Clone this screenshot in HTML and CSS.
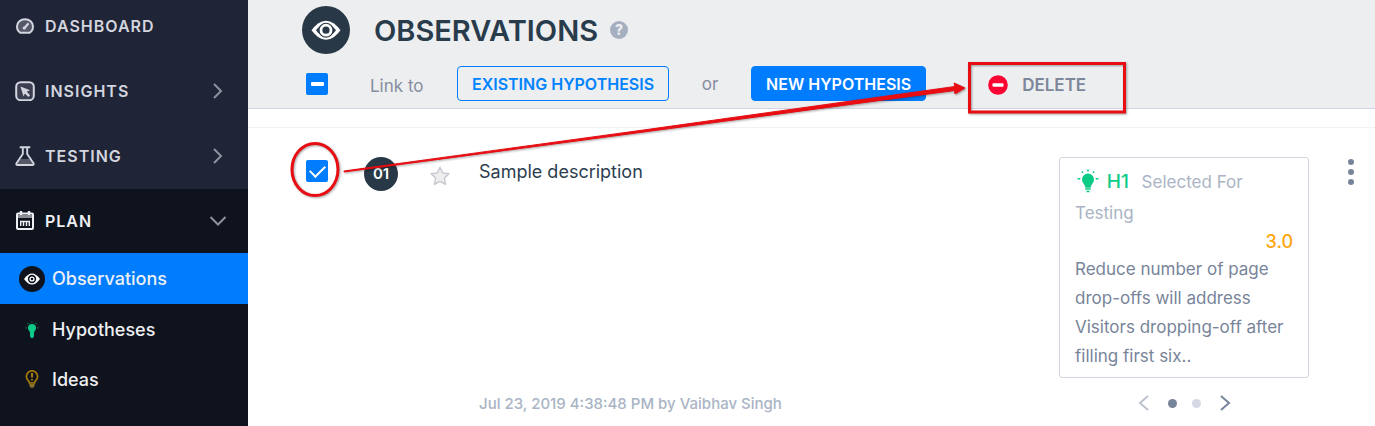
FILE: index.html
```html
<!DOCTYPE html>
<html lang="en">
  <head>
    <meta charset="UTF-8" />
    <meta name="viewport" content="width=device-width, initial-scale=1.0" />
    <title>Observations</title>
    <link rel="stylesheet" href="styles.css">
  </head>
  <body>
    <div class="container">
      <nav class="sidebar">
        <div class="nav-group">
          <a class="nav-item" href="#">
            <svg class="nav-icon" viewBox="0 0 20 20">
              <path d="M5.500 16.800q-3.500-2-3.500-6.300a8 7.300 0 0 1 16 0q0 4.300-3.500 6.300z" fill="#545869" stroke="currentColor" stroke-width="2" stroke-linejoin="round" />
              <path d="M9.500 12L13 8" stroke="currentColor" stroke-width="2.200" stroke-linecap="round" />
              <circle cx="9.200" cy="12" r="1.600" fill="currentColor" />
            </svg>
            <span>DASHBOARD</span>
          </a>
          <a class="nav-item" href="#">
            <svg class="nav-icon" viewBox="0 0 20 20">
              <rect x="1.200" y="1.200" width="17.600" height="18" rx="4.500" fill="#3b3f51" stroke="currentColor" stroke-width="2" />
              <path d="M5.500 5.500l9.500 3.700-3.200 1.600 3.300 3.400-1.800 1.800-3.400-3.500-1.400 3z" fill="currentColor" />
            </svg>
            <span>INSIGHTS</span>
            <svg class="chevron" viewBox="0 0 18 18"><path d="M5 2l7 7-7 7" /></svg>
          </a>
          <a class="nav-item" href="#">
            <svg class="nav-icon" viewBox="0 0 20 20">
              <path d="M5.500 13h9l3.500 5H2z" fill="#545869" />
              <path d="M5.500 1.200h9M7.800 1.500v6.500L1.500 17.200q-.8 1.800 1.200 1.800h14.600q2 0 1.200-1.800L12.200 8V1.500" fill="none" stroke="currentColor" stroke-width="1.900" stroke-linecap="round" stroke-linejoin="round" />
            </svg>
            <span>TESTING</span>
            <svg class="chevron" viewBox="0 0 18 18"><path d="M5 2l7 7-7 7" /></svg>
          </a>
        </div>

        <div class="nav-group open">
          <a class="nav-item" href="#">
            <svg class="nav-icon" viewBox="0 0 20 20">
              <rect x="2" y="2.500" width="16" height="15.500" rx="1" fill="none" stroke="currentColor" stroke-width="2" />
              <path d="M3 5.500h14" stroke="#8b8e96" stroke-width="3" />
              <path d="M6 0v4M14 0v4" stroke="currentColor" stroke-width="2.400" />
              <path d="M5 10.500h10M5.700 11v4M8.500 11v4M11.500 11v4M14.300 11v4" stroke="currentColor" stroke-width="1.400" />
            </svg>
            <span>PLAN</span>
            <svg class="chevron" viewBox="0 0 18 18"><path d="M1.500 5L9 12.500 16.500 5" /></svg>
          </a>
          <a class="sub-item active" href="#">
            <svg class="sub-icon" viewBox="0 0 26 26">
              <circle cx="13" cy="13" r="13" fill="#0f131d" />
              <path d="M5 13q8-11 16 0-8 11-16 0z" fill="#fff" />
              <circle cx="13" cy="13" r="4.200" fill="#0f131d" />
              <circle cx="13" cy="13" r="2.600" fill="#fff" />
              <circle cx="13" cy="13" r="1.300" fill="#0f131d" />
            </svg>
            <span>Observations</span>
          </a>
          <a class="sub-item" href="#">
            <svg class="sub-icon" viewBox="0 0 26 26">
              <path d="M13 8a4 4 0 0 1 4 4q0 1.500-1 2.800-1 1-1 2.400V20l-1 2h-2l-1-2v-2.800q0-1.400-1-2.400-1-1.300-1-2.800a4 4 0 0 1 4-4z" fill="#0ccb87" />
              <path d="M13 5.500v1M8.700 7.200l.8.800M17.300 7.200l-.8.800M6.500 11.800h1.200M18.300 11.800h1.200" stroke="#0a8a62" stroke-width="1.200" />
            </svg>
            <span>Hypotheses</span>
          </a>
          <a class="sub-item" href="#">
            <svg class="sub-icon" viewBox="0 0 26 26">
              <path d="M10.500 17q0-1.500-1.200-2.300a5.600 5.600 0 1 1 7.400 0q-1.200.8-1.200 2.300z" fill="none" stroke="#a57c08" stroke-width="1.700" />
              <path d="M13 7v4.500M13 13v1.500" stroke="#a57c08" stroke-width="2" />
              <path d="M10.300 17.800h5.400v2l-1.500 2h-2.400l-1.500-2z" fill="#8a6f2a" />
            </svg>
            <span>Ideas</span>
          </a>
        </div>
      </nav>

      <main class="main-content">
        <header class="header">
          <div class="title-row">
            <svg class="title-icon" viewBox="0 0 48 48">
              <circle cx="24" cy="24" r="24" fill="#283846" />
              <path d="M9.500 24.200q3-4 6.500-6.700 8-5.500 16 0 3.500 2.700 6.500 6.700-3 4-6.500 6.700-8 5.500-16 0-3.500-2.700-6.500-6.700z" fill="#fff" />
              <path d="M14 24.200q10-13.500 20 0-10 13.500-20 0z" fill="#283846" />
              <circle cx="24" cy="24.200" r="7.500" fill="#283846" />
              <circle cx="24" cy="24.200" r="5" fill="none" stroke="#fff" stroke-width="2.800" />
            </svg>
            <h1>OBSERVATIONS</h1>
            <button class="help" aria-label="Help">?</button>
          </div>
          <div class="toolbar">
            <input type="checkbox" class="check partial" aria-label="Select all" />
            <span class="link-to">Link to</span>
            <button class="button outline">EXISTING HYPOTHESIS</button>
            <span class="or">or</span>
            <button class="button">NEW HYPOTHESIS</button>
            <button class="delete">
              <svg class="delete-icon" viewBox="0 0 20 20">
                <circle cx="10" cy="10" r="9.800" fill="#fb0433" />
                <rect x="4.500" y="8.300" width="11" height="3.400" rx="1" fill="#fff" />
              </svg>
              DELETE
            </button>
          </div>
        </header>

        <section class="observation">
          <input type="checkbox" class="check" aria-label="Select observation 01" checked />
          <span class="number">01</span>
          <button class="star" aria-label="Star">
            <svg viewBox="0 0 20 20">
              <path d="M10 1.200l2.700 5.700 6.200.8-4.500 4.400 1.100 6.300L10 15.400l-5.500 3 1.100-6.300L1.100 7.700l6.200-.8z" fill="#ededee" stroke="#c6c8cf" stroke-width="1.400" stroke-linejoin="round" />
            </svg>
          </button>
          <div class="details">
            <p class="description">Sample description</p>
            <p class="created">Jul 23, 2019 4:38:48 PM by Vaibhav Singh</p>
          </div>
          <div class="linked">
            <article class="hypothesis-card">
              <p class="status">
                <svg class="bulb" viewBox="0 0 22 24">
                  <path d="M11 4.500a6 6 0 0 1 6 6q0 2.200-1.500 4-1.700 1.700-1.800 4.300H8.300q-.1-2.600-1.800-4.300-1.500-1.800-1.500-4a6 6 0 0 1 6-6z" fill="#0ccb87" />
                  <path d="M8.300 20h5.400M9.500 22.500h3" stroke="#0ccb87" stroke-width="1.700" />
                  <path d="M11 .5v2M4.800 2.500l1.200 1.300M17.200 2.500L16 3.800M.5 9.700h2.800M18.700 9.700h2.800" stroke="#0ccb87" stroke-width="1.600" />
                </svg>
                <a class="code" href="#">H1</a>
                <span>Selected For</span>
                <span>Testing</span>
              </p>
              <p class="score">3.0</p>
              <p class="summary">Reduce number of page drop-offs will address Visitors dropping-off after filling first six..</p>
            </article>
            <div class="pager">
              <button class="arrow disabled" aria-label="Previous"><svg viewBox="0 0 18 18"><path d="M13 2L5 9l8 7" /></svg></button>
              <span class="dot current"></span>
              <span class="dot"></span>
              <button class="arrow" aria-label="Next"><svg viewBox="0 0 18 18"><path d="M5 2l8 7-8 7" /></svg></button>
            </div>
          </div>
          <button class="more" aria-label="More actions">
            <span></span><span></span><span></span>
          </button>
        </section>
      </main>

      <!-- Callouts drawn over the page -->
      <svg class="callouts" width="1130" height="210" viewBox="0 0 1130 210">
        <ellipse cx="315" cy="169.500" rx="23" ry="26" />
        <rect x="969.500" y="63.500" width="155" height="48.500" />
        <path class="arrow-line" d="M344 171L640 130.500 955 86.500l-1-3.500 11 5-10 6-.5-3.500L640 132.500 344 172z" />
      </svg>
    </div>
  </body>
</html>
```
FILE: styles.css
```css
* {
  margin: 0;
  padding: 0;
  box-sizing: border-box;
  font-family: Inter, "Liberation Sans", sans-serif;
}

body {
  overflow-x: hidden;
  background: white;
}

a {
  color: inherit;
  text-decoration: none;
}

button {
  border: none;
  background: none;
  cursor: pointer;
}

svg {
  display: block;
}

.container {
  display: grid;
  grid-template-columns: 248px 1fr;
  min-height: 100vh;
  position: relative;
}

/* Sidebar */
.sidebar {
  background: #0f131d;
}

.nav-group {
  background: #1f2436;
  color: #d3d5df;
  padding: 14px 0 21px;
  display: flex;
  flex-direction: column;
  gap: 41px;
}

.nav-group.open {
  display: block;
  background: #0f131d;
  color: #eeeff2;
  padding: 20px 0;
}

.nav-item {
  display: flex;
  align-items: center;
  gap: 10px;
  height: 24px;
  padding: 0 21px 0 15px;
  font-size: 16px;
  font-weight: 600;
  letter-spacing: 1px;
}

.open .nav-item {
  margin-bottom: 20px;
}

.nav-icon {
  width: 20px;
  height: 20px;
}

.chevron {
  width: 18px;
  height: 18px;
  margin-left: auto;
  fill: none;
  stroke: #8f929e;
  stroke-width: 2;
}

.sub-item {
  display: flex;
  align-items: center;
  gap: 7px;
  height: 50px;
  padding-left: 19px;
  font-size: 18px;
  font-weight: 500;
}

.sub-item.active {
  height: 51px;
  background: #007dff;
}

.sub-icon {
  width: 26px;
  height: 26px;
}

/* Page header */
.header {
  background: #edeef0;
  border-bottom: 1px solid #d3d5e6;
  padding: 6px 0 7px 54px;
}

.title-row {
  display: flex;
  align-items: center;
  height: 48px;
  margin-bottom: 12px;
}

.title-icon {
  width: 48px;
  height: 48px;
  margin-right: 24px;
}

.header h1 {
  font-size: 29px;
  font-weight: 600;
  color: #283c4c;
}

.help {
  width: 18px;
  height: 18px;
  margin-left: 12px;
  border-radius: 50%;
  background: #a5afc0;
  color: #edeef0;
  font-size: 14px;
  font-weight: 800;
  line-height: 18px;
}

.toolbar {
  display: flex;
  align-items: center;
  height: 35px;
  padding-left: 4px;
  font-size: 17px;
  color: #858da0;
}

.link-to {
  width: 87px;
  margin-left: 42px;
  padding-top: 4px;
}

.or {
  width: 82px;
  text-align: center;
}

.button {
  height: 35px;
  padding: 0 14px;
  border: 1px solid #007dff;
  border-radius: 4px;
  background: #007dff;
  color: white;
  font-size: 16px;
  font-weight: 600;
}

.button.outline {
  background: transparent;
  color: #0083ff;
}

.delete {
  display: flex;
  align-items: center;
  gap: 14px;
  margin-left: 62px;
  padding-top: 3px;
  color: #7c8799;
  font-size: 17px;
  font-weight: 600;
}

.delete-icon {
  width: 20px;
  height: 20px;
}

.check {
  appearance: none;
  display: grid;
  place-items: center;
  width: 22px;
  height: 22px;
  border-radius: 2px;
  background: #007dff;
}

.check::after {
  content: "";
  width: 13px;
  height: 7px;
  margin-bottom: 4px;
  border-left: 2px solid white;
  border-bottom: 2px solid white;
  transform: rotate(-45deg);
}

.check.partial::after {
  height: 4px;
  margin: 0;
  border: none;
  border-radius: 1px;
  background: white;
  transform: none;
}

/* Observation row */
.observation {
  display: grid;
  grid-template-columns: 58px 66px 49px 1fr 250px 66px;
  align-items: start;
  margin-top: 18px;
  padding: 29px 0 10px 58px;
  border-top: 1px solid #f1f1f2;
}

.observation .check {
  margin-top: 3px;
}

.number {
  width: 34px;
  height: 34px;
  border-radius: 50%;
  background: #283846;
  color: white;
  font-size: 15px;
  font-weight: 600;
  line-height: 34px;
  text-align: center;
}

.star {
  width: 20px;
  margin-top: 9px;
}

.details {
  display: flex;
  flex-direction: column;
  justify-content: space-between;
  align-self: stretch;
}

.description {
  font-size: 18px;
  line-height: 30px;
  color: #2d3e4f;
}

.created {
  font-size: 15px;
  font-weight: 500;
  line-height: 16px;
  color: #a9b4c4;
}

.hypothesis-card {
  height: 221px;
  padding: 8px 15px;
  border: 1px solid #cfd6df;
  border-radius: 3px;
}

.status {
  font-size: 17px;
  line-height: 31px;
  color: #aab4c4;
}

.bulb {
  display: inline-block;
  width: 22px;
  height: 24px;
  margin: 0 3px 4px 2px;
  vertical-align: middle;
}

.code {
  margin-right: 8px;
  color: #0ccb87;
  font-size: 19px;
  font-weight: 500;
}

.score {
  color: #fda50f;
  font-size: 18px;
  font-weight: 500;
  line-height: 26px;
  text-align: right;
}

.summary {
  color: #788499;
  font-size: 17px;
  line-height: 29px;
}

.pager {
  display: flex;
  align-items: center;
  justify-content: center;
  gap: 15px;
  height: 18px;
  margin-top: 16px;
}

.arrow svg {
  width: 18px;
  height: 18px;
  fill: none;
  stroke: #788499;
  stroke-width: 2;
}

.arrow.disabled svg {
  stroke: #bcc3ce;
}

.dot {
  width: 9px;
  height: 9px;
  border-radius: 50%;
  background: #d5d8e5;
}

.dot.current {
  background: #788499;
}

.more {
  display: flex;
  flex-direction: column;
  gap: 4px;
  margin: 2px 0 0 39px;
}

.more span {
  width: 6px;
  height: 6px;
  border-radius: 50%;
  background: #788499;
}

.callouts {
  position: absolute;
  top: 0;
  left: 0;
  pointer-events: none;
  fill: none;
  stroke: #e80d12;
  stroke-width: 3;
  filter: drop-shadow(1px 1px 1px rgba(0, 0, 0, 0.35));
}

.callouts .arrow-line {
  fill: #e80d12;
  stroke-width: 1;
}
```
